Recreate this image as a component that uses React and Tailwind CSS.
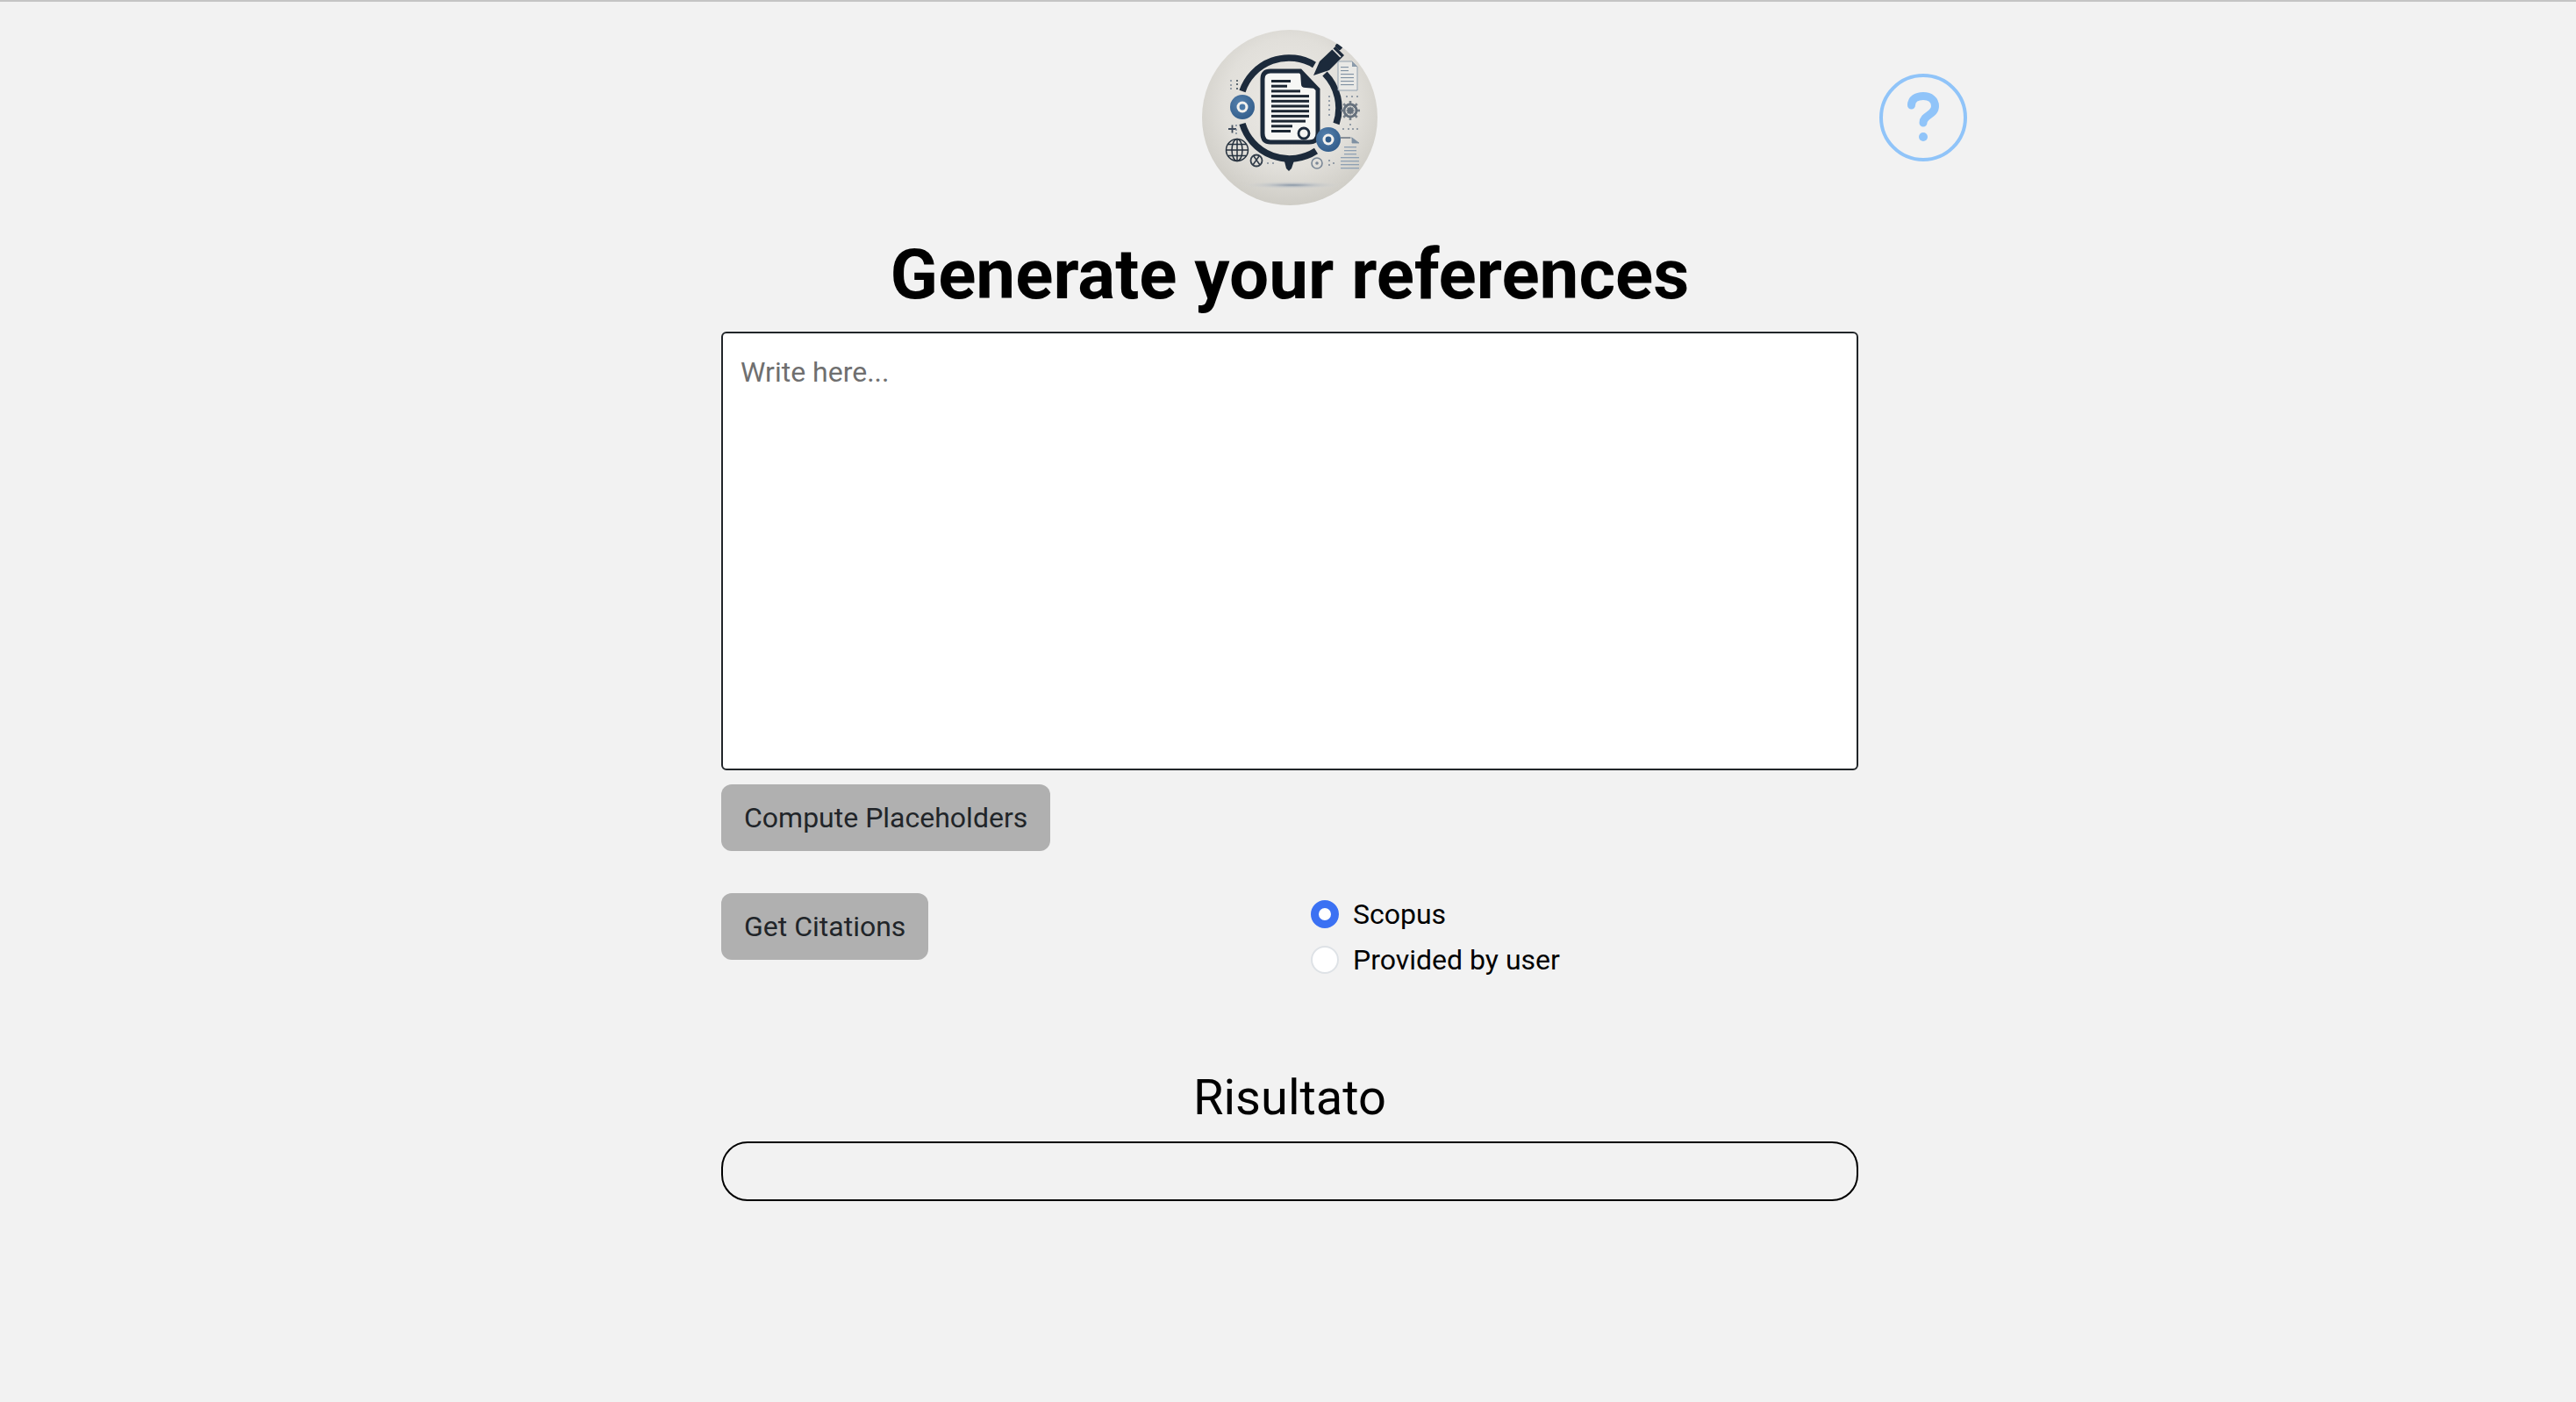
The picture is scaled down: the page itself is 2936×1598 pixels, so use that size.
const docLines = [
  [79, 101], [79, 97], [79, 112], [79, 122], [79, 122], [79, 122], [79, 122], [79, 122], [79, 118], [79, 103], [79, 101],
];

const Logo = () => (
  <svg viewBox="0 0 200 200" className="w-[200px] h-[200px] block">
    <defs>
      <radialGradient id="logoBg" cx="50%" cy="42%" r="62%">
        <stop offset="0%" stopColor="#eceae6" />
        <stop offset="60%" stopColor="#e1dfda" />
        <stop offset="100%" stopColor="#cbc9c2" />
      </radialGradient>
      <radialGradient id="logoBlue" cx="40%" cy="35%" r="75%">
        <stop offset="0%" stopColor="#5580ac" />
        <stop offset="100%" stopColor="#2f5a88" />
      </radialGradient>
      <radialGradient id="logoShadow">
        <stop offset="0%" stopColor="#8795a5" />
        <stop offset="45%" stopColor="#bcc1c6" stopOpacity="0.7" />
        <stop offset="100%" stopColor="#d8d7d3" stopOpacity="0" />
      </radialGradient>
      <filter id="soft"><feGaussianBlur stdDeviation="0.5" /></filter>
      <clipPath id="logoClip"><circle cx="100" cy="100" r="100" /></clipPath>
    </defs>
    <g clipPath="url(#logoClip)">
      <rect width="200" height="200" fill="url(#logoBg)" />
      <ellipse cx="103" cy="177" rx="60" ry="4.500" fill="url(#logoShadow)" />
      <g filter="url(#soft)">
        {/* ring */}
        <path d="M46 70 A56 56 0 0 1 128 40" fill="none" stroke="#1f2b3a" strokeWidth="7.500" />
        <path d="M140 50 A56 56 0 0 1 153 107" fill="none" stroke="#1f2b3a" strokeWidth="7.500" />
        <path d="M46 107 A56 56 0 0 0 130 138" fill="none" stroke="#1f2b3a" strokeWidth="7.500" />
        <path d="M93 146 L106 146 L102 158 L99 161 L96 158 Z" fill="#1f2b3a" />
        {/* document */}
        <path d="M78 47 L112 47 L132 68 L132 118 Q132 128 122 128 L78 128 Q69 128 69 118 L69 56 Q69 47 78 47 Z" fill="#f7f7f5" stroke="#1f2b3a" strokeWidth="5" />
        <path d="M112 48 L113 62 Q113 66 118 66 L131 67 Z" fill="#1f2b3a" />
        {docLines.map(([x1, x2], i) => (
          <rect key={i} x={x1} y={57 + i * 5.7} width={x2 - x1} height="3" fill="#1a2533" />
        ))}
        <circle cx="116" cy="118" r="6" fill="#f4f3f0" stroke="#1f2b3a" strokeWidth="2.800" />
        {/* pen */}
        <path d="M127 52 L134 36 L152 19 L162 29 L145 46 Z" fill="#1f2b3a" />
        <path d="M148 21 L158 31" stroke="#e8e7e3" strokeWidth="1.6" />
        <rect x="152" y="16" width="8" height="6" rx="2" transform="rotate(45 156 19)" fill="#1f2b3a" />
        {/* discs */}
        <circle cx="46" cy="88" r="14" fill="url(#logoBlue)" />
        <circle cx="46" cy="88" r="6.5" fill="#f2f1ee" />
        <circle cx="46" cy="88" r="3.4" fill="#4d7aa8" />
        <circle cx="144" cy="125" r="14" fill="url(#logoBlue)" />
        <circle cx="144" cy="125" r="6.5" fill="#f2f1ee" />
        <circle cx="144" cy="125" r="3.4" fill="#2f5a88" />
        {/* top right sheet */}
        <path d="M155 36 L171 36 L177 42 L177 69 L155 69 Z" fill="#e9e9e6" stroke="#8b9bab" strokeWidth="0.9" />
        <path d="M171 36 L171 42 L177 42 Z" fill="#8b9bab" />
        {[42, 46, 50, 54, 58, 62].map((y) => (
          <rect key={y} x="158" y={y} width={y < 47 ? 9 : 15} height="1.1" fill="#7f90a2" />
        ))}
        {/* gear */}
        <circle cx="169" cy="92" r="7" fill="none" stroke="#66717d" strokeWidth="3" />
        {[0, 45, 90, 135].map((a) => (
          <rect key={a} x="167.7" y="81" width="2.6" height="22" fill="#66717d" transform={`rotate(${a} 169 92)`} opacity="0.85" />
        ))}
        <circle cx="169" cy="92" r="5" fill="none" stroke="#e3e1dc" strokeWidth="1" />
        <circle cx="169" cy="92" r="3.200" fill="#66717d" />
        {/* lower right sheet */}
        <path d="M158 123 L171 123 L171 129 L179 129 L171 123" fill="#7f90a2" stroke="#7f90a2" strokeWidth="0.8" />
        <path d="M158 123 L169 123" stroke="#555f6b" strokeWidth="1" />
        {[133, 137, 141, 145, 149, 153, 157].map((y, i) => (
          <rect key={y} x={i > 2 ? 158 : 162} y={y} width={i > 2 ? 21 : 14} height="1.3" fill="#8ea0b3" />
        ))}
        {/* globe */}
        <g fill="none" stroke="#27323f" strokeWidth="1.5">
          <circle cx="40" cy="137" r="12.5" />
          <ellipse cx="40" cy="137" rx="6" ry="12.5" />
          <path d="M40 124.5 V149.5 M27.5 137 H52.5 M29.5 130.5 H50.5 M29.5 143.5 H50.5" />
        </g>
        {/* small marks */}
        <circle cx="62" cy="149" r="6.5" fill="none" stroke="#313c49" strokeWidth="1.8" />
        <path d="M58 154 L65 144 M66 154 L59 144" stroke="#313c49" strokeWidth="1.6" />
        <circle cx="131" cy="152" r="6" fill="none" stroke="#7a8796" strokeWidth="1.6" />
        <circle cx="131" cy="152" r="1.8" fill="#7a8796" />
        <path d="M30 113 H39 M34.500 108.500 V117.500" stroke="#3f4c5b" strokeWidth="1.8" />
        {[[40, 58], [40, 62], [40, 67], [33, 58], [33, 63], [33, 67], [39, 109], [39, 114], [39, 118], [145, 76], [145, 81], [145, 86], [145, 91], [145, 97], [165, 76], [171, 76], [177, 76], [161, 113], [167, 113], [172, 113], [177, 113], [169, 108], [75, 152], [81, 152], [145, 149], [145, 154], [150, 152]].map(([x, y], i) => (
          <circle key={i} cx={x} cy={y} r="1" fill={i < 3 ? "#33404e" : "#7a8796"} />
        ))}
      </g>
    </g>
  </svg>
);

const HelpIcon = () => (
  <svg viewBox="0 0 100 100" className="w-[100px] h-[100px] block">
    <circle cx="50" cy="50" r="48" fill="none" stroke="#90c4f9" strokeWidth="4" />
    <path d="M36.500 36 C36.500 29 42 25.500 50 25.500 C58 25.500 63.500 30 63.500 37 C63.500 47 50 47 50 56" fill="none" stroke="#90c4f9" strokeWidth="9" strokeLinecap="round" />
    <circle cx="50" cy="72" r="5" fill="#90c4f9" />
  </svg>
);

const App = () => {
  return (
    <div className="min-h-[1598px] bg-[#f2f2f2] border-t-2 border-[#c4c4c4] font-['Roboto',sans-serif] pl-[4px] flex flex-col items-center">
      {/* Header */}
      <div className="w-[1544px] grid grid-cols-[1fr_200px_1fr] items-center pt-[32px]">
        <div />
        <Logo />
        <div className="flex justify-end">
          <HelpIcon />
        </div>
      </div>

      <div className="w-[1296px] flex flex-col">
        <h1 className="mt-[31px] text-center text-[80px] leading-[96px] font-bold text-black">
          Generate your references
        </h1>

        <textarea
          placeholder="Write here..."
          className="mt-[17px] h-[500px] w-full bg-white border-2 border-[#212529] rounded-[6px] px-[20px] pt-[20px] pb-[14px] text-[32px] leading-[48px] resize-none outline-none placeholder:text-[#6f6f6f]"
        />

        <div className="mt-[16px]">
          <button className="h-[76px] px-[26px] bg-[#b0b0b0] rounded-[12px] text-[32px] text-[#212529]">
            Compute Placeholders
          </button>
        </div>

        <div className="mt-[48px] grid grid-cols-2">
          <div>
            <button className="h-[76px] px-[26px] bg-[#b0b0b0] rounded-[12px] text-[32px] text-[#212529]">
              Get Citations
            </button>
          </div>
          <div className="pl-[24px] pt-[8px] flex flex-col gap-[20px] text-[32px] text-black">
            <label className="flex items-center gap-[16px] h-[32px]">
              <span className="w-[32px] h-[32px] rounded-full border-[9px] border-[#3b71f3] bg-white" />
              Scopus
            </label>
            <label className="flex items-center gap-[16px] h-[32px]">
              <span className="w-[32px] h-[32px] rounded-full border-2 border-[#dee2e6] bg-white" />
              Provided by user
            </label>
          </div>
        </div>

        <h2 className="mt-[99px] text-center text-[56px] leading-[84px] font-normal text-black">Risultato</h2>

        <div className="mt-[8px] h-[68px] rounded-[30px] border-2 border-black" />
      </div>
    </div>
  );
};

export default App;
